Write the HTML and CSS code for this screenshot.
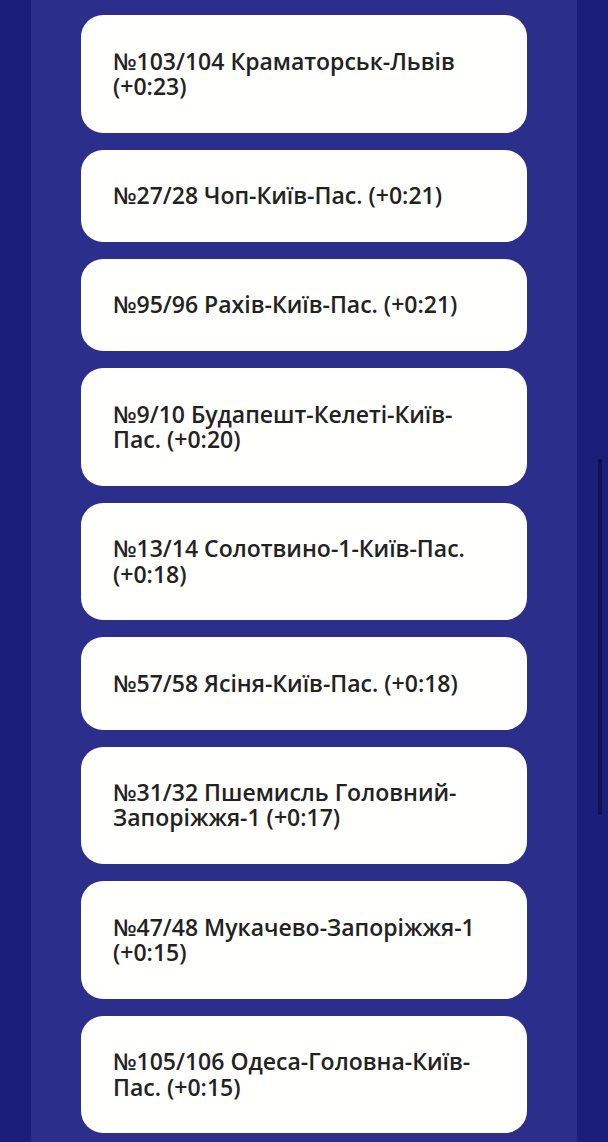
FILE: index.html
```html
<!DOCTYPE html>
<html lang="uk">
<head>
<meta charset="utf-8">
<title>Затримки поїздів</title>
<link rel="stylesheet" href="styles.css">
</head>
<body>
<main class="column">
  <ul class="trains">
    <li class="train">№103/104 Краматорськ-Львів (+0:23)</li>
    <li class="train">№27/28 Чоп-Київ-Пас. (+0:21)</li>
    <li class="train">№95/96 Рахів-Київ-Пас. (+0:21)</li>
    <li class="train">№9/10 Будапешт-Келеті-Київ-Пас. (+0:20)</li>
    <li class="train">№13/14 Солотвино-1-Київ-Пас. (+0:18)</li>
    <li class="train">№57/58 Ясіня-Київ-Пас. (+0:18)</li>
    <li class="train">№31/32 Пшемисль Головний-Запоріжжя-1 (+0:17)</li>
    <li class="train">№47/48 Мукачево-Запоріжжя-1 (+0:15)</li>
    <li class="train">№105/106 Одеса-Головна-Київ-Пас. (+0:15)</li>
  </ul>
</main>
<div class="scroll-thumb"></div>
</body>
</html>
```

FILE: styles.css
```css
html, body {
  margin: 0;
  padding: 0;
}

body {
  background: #1c1e7c;
  font-family: "Open Sans", "Noto Sans", sans-serif;
  color: #222222;
  height: 1142px;
  overflow: hidden;
}

.column {
  margin: 0 31px;
  background: #2b2e8a;
  min-height: 1142px;
  padding-top: 15px;
  box-sizing: border-box;
}

.trains {
  list-style: none;
  margin: 0;
  padding: 0 50px;
  display: flex;
  flex-direction: column;
  gap: 17px;
}

.train {
  background: #fffffd;
  border-radius: 22px;
  padding: 33.5px 32px;
  font-size: 23px;
  font-weight: 600;
  line-height: 25.3px;
}

.scroll-thumb {
  position: fixed;
  right: 6px;
  top: 459px;
  width: 4px;
  height: 356px;
  border-radius: 2px;
  background: #0f1152;
}
```
